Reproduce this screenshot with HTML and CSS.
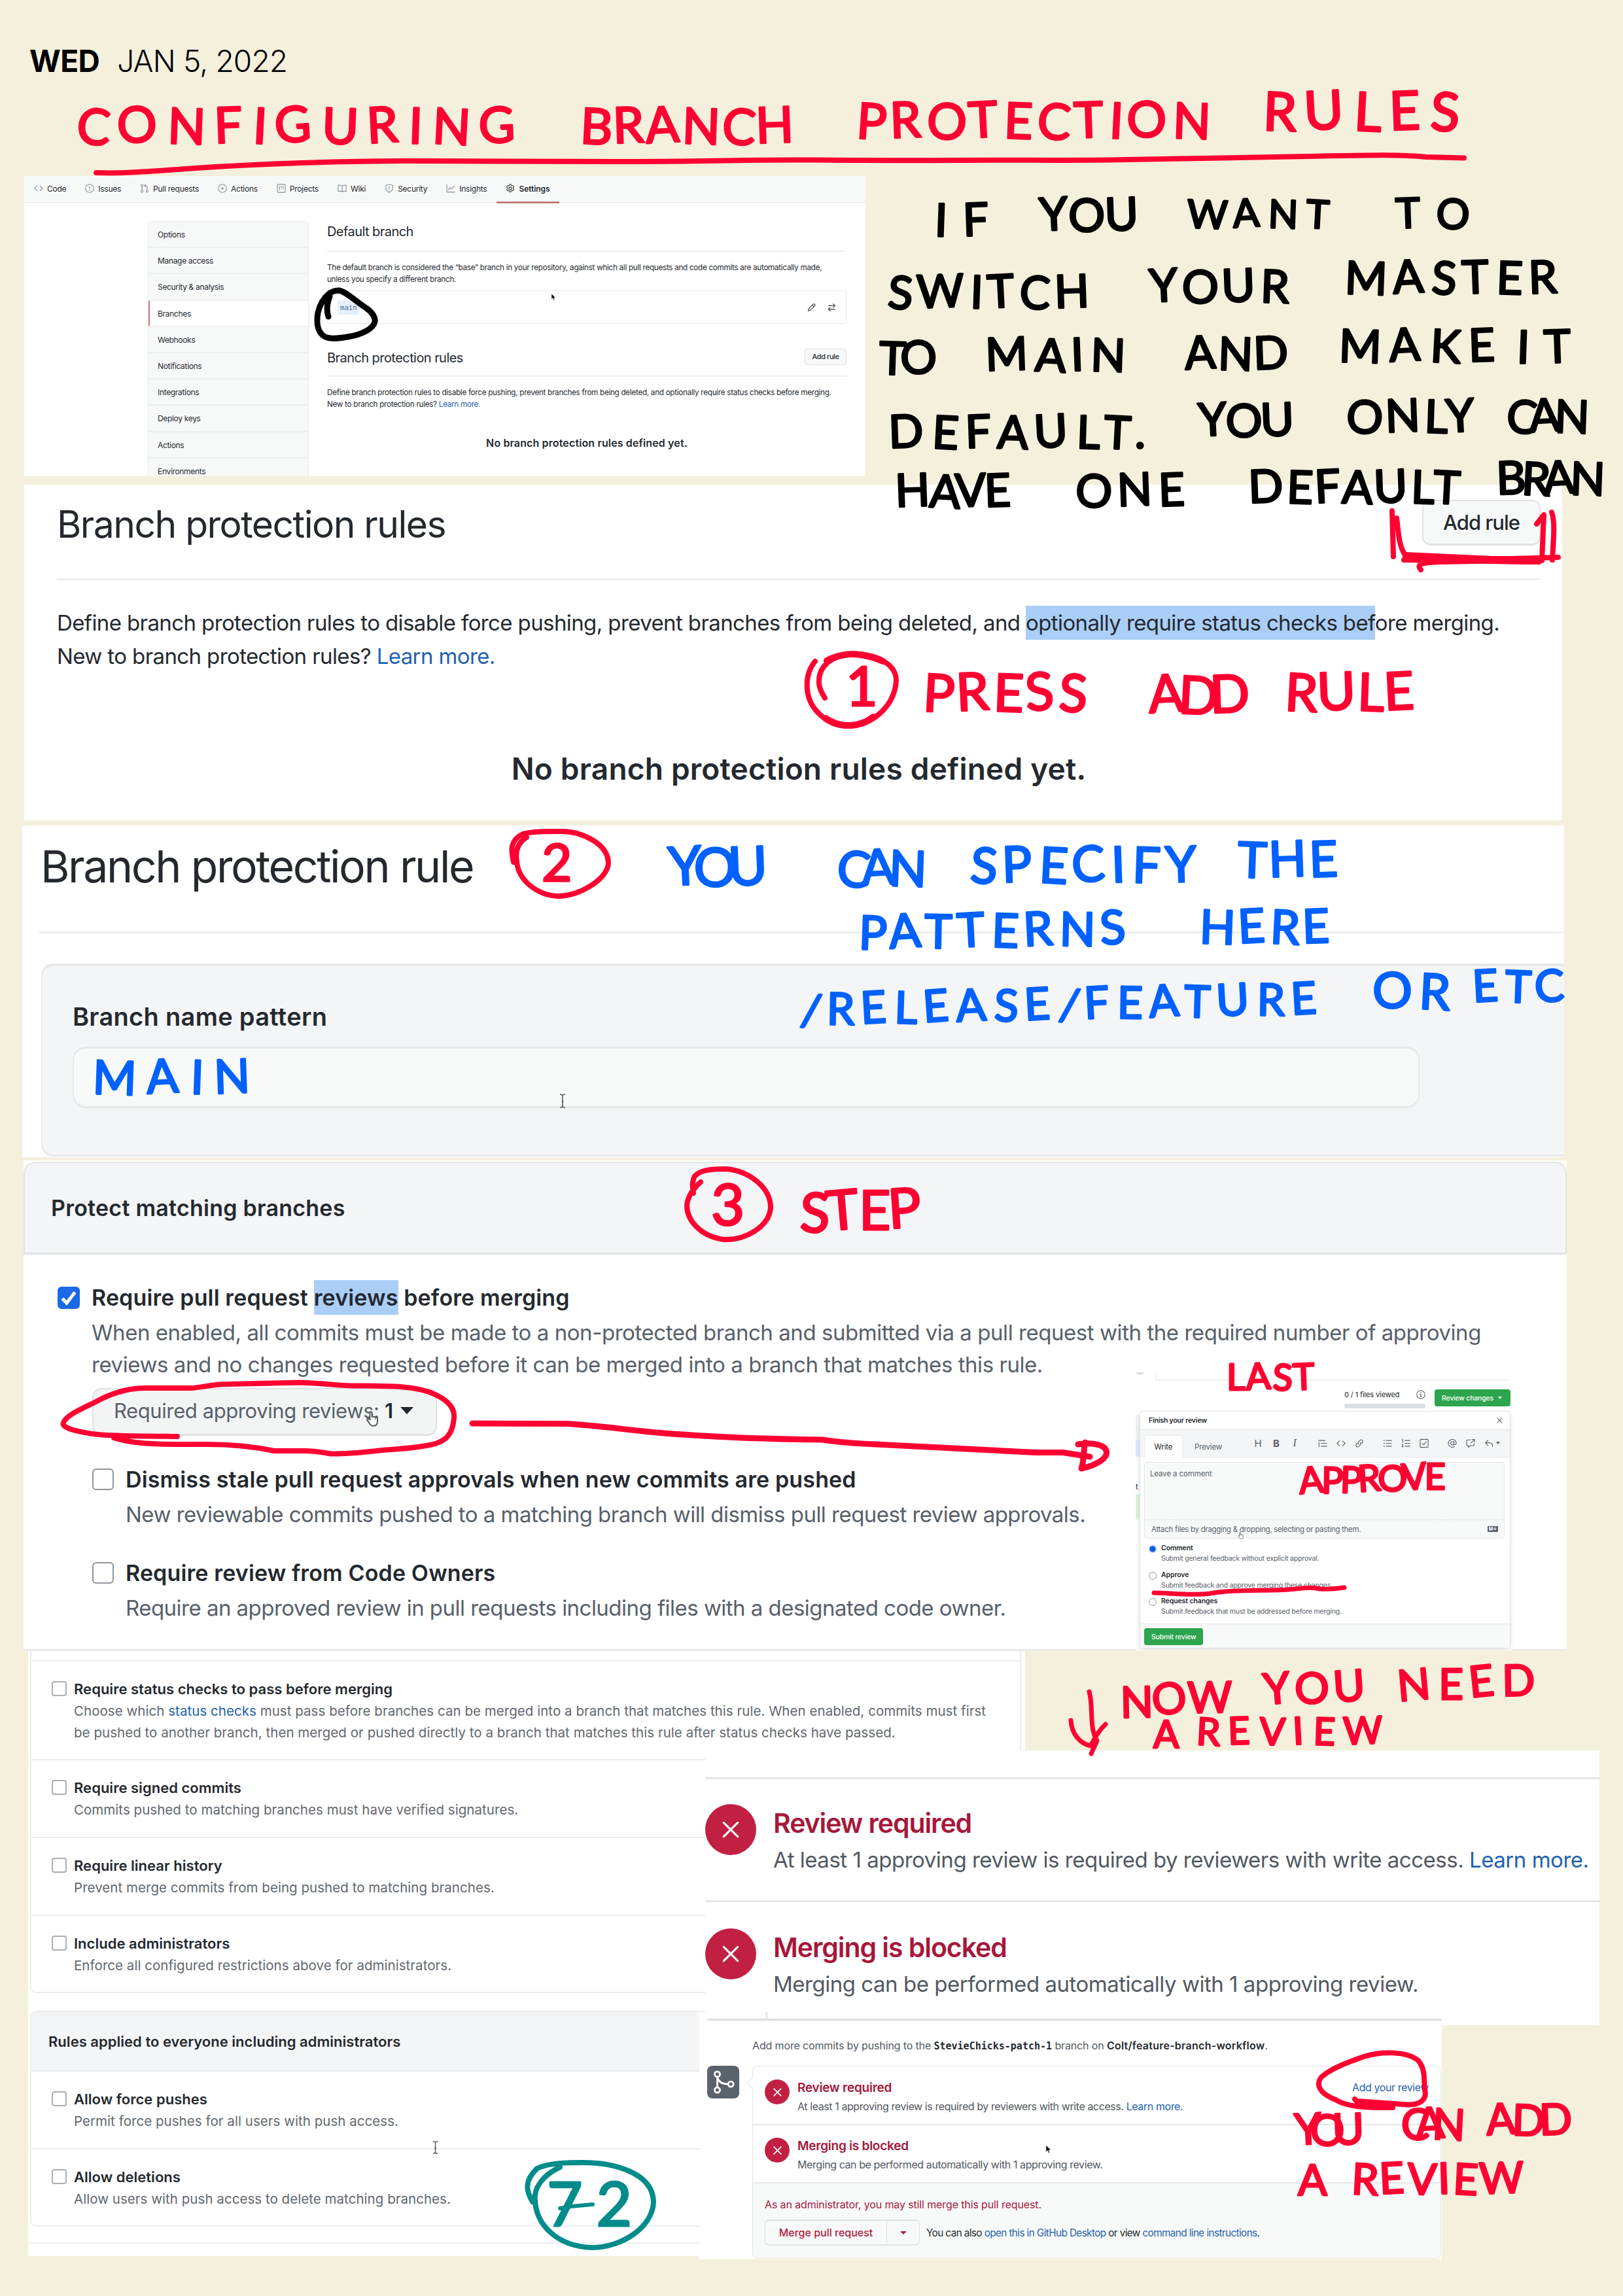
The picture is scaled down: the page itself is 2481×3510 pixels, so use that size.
FILE: index.html
```
<!DOCTYPE html>
<html lang="en">
<head>
<meta charset="utf-8">
<title>Configuring branch protection rules</title>
<link rel="stylesheet" href="styles.css">
</head>
<body>
<svg width="0" height="0" class="defs">
  <symbol id="i-code" viewBox="0 0 16 16"><path d="M5.2 3.8 1 8l4.2 4.2M10.8 3.8 15 8l-4.2 4.2"/></symbol>
  <symbol id="i-issue" viewBox="0 0 16 16"><circle cx="8" cy="8" r="7.2"/><path d="M8 4.2v4.6M8 11v1"/></symbol>
  <symbol id="i-info" viewBox="0 0 16 16"><circle cx="8" cy="8" r="7.2"/><path d="M8 4v1M6.6 7.3H8v4M6.4 11.4h3.4"/></symbol>
  <symbol id="i-pr" viewBox="0 0 16 16"><circle cx="3.5" cy="3" r="1.8"/><circle cx="3.5" cy="13" r="1.8"/><circle cx="12.5" cy="13" r="1.8"/><path d="M3.5 5v6M12.5 11V5.500c0-1.500-.8-2.300-2.200-2.300H8M10 1 7.800 3.200 10 5.400"/></symbol>
  <symbol id="i-play" viewBox="0 0 16 16"><circle cx="8" cy="8" r="7.2"/><path d="M6.600 5.300v5.400L11 8z" fill="currentColor" stroke="none"/></symbol>
  <symbol id="i-project" viewBox="0 0 16 16"><rect x="1" y="1" width="14" height="14" rx="1.500"/><path d="M4.700 4v7M8 4v3M11.300 4v5"/></symbol>
  <symbol id="i-book" viewBox="0 0 16 16"><path d="M8 4.200C7 3 6 2.500 4.500 2.500H1v10.500h4.300c1.200 0 2 .4 2.700 1.200.7-.8 1.500-1.200 2.700-1.200H15V2.500h-3.500C10 2.500 9 3 8 4.200zM8 4.200v10"/></symbol>
  <symbol id="i-shield" viewBox="0 0 16 16"><path d="M8 .9 14 2.800v4.700c0 3.400-2.200 5.900-6 7.500-3.800-1.600-6-4.100-6-7.500V2.800zM8 4.500v4M8 10.600v1"/></symbol>
  <symbol id="i-graph" viewBox="0 0 16 16"><path d="M1.200 1.500v13h14M4 10.500l3-4 2.500 2.500L14.500 4"/></symbol>
  <symbol id="i-gear" viewBox="0 0 16 16"><circle cx="8" cy="8" r="2.400"/><path d="M6.700 1h2.600l.5 2 1.300.7 2-.6 1.300 2.300-1.500 1.400v1.600l1.500 1.400-1.300 2.300-2-.6-1.300.7-.5 2H6.700l-.5-2-1.300-.7-2 .6-1.300-2.300 1.500-1.400V6.800L1.600 5.400l1.300-2.300 2 .6 1.300-.7z"/></symbol>
  <symbol id="i-pencil" viewBox="0 0 16 16"><path d="M11.300 1.700c.6-.6 1.500-.6 2.100 0l.9.900c.6.600.6 1.500 0 2.100L5.700 13.300l-4 1 1-4zM9.700 3.500l2.800 2.800"/></symbol>
  <symbol id="i-swap" viewBox="0 0 16 16"><path d="M2 4.700h12M11 1.500l3.200 3.200L11 7.900M14 11.300H2M5 8.100l-3.200 3.200L5 14.500"/></symbol>
  <symbol id="i-x" viewBox="0 0 16 16"><path d="M3.500 3.500l9 9M12.500 3.500l-9 9"/></symbol>
  <symbol id="i-merge" viewBox="0 0 16 16"><circle cx="4" cy="2.900" r="1.700"/><circle cx="4" cy="13.100" r="1.700"/><circle cx="12.700" cy="9.300" r="1.700"/><path d="M4 4.700v6.600M4 4.900c.7 2.800 2.900 4.400 6.900 4.400"/></symbol>
  <symbol id="i-quote" viewBox="0 0 16 16"><path d="M1 3h11M5.500 8H15M5.500 13H15M1.500 6.500V14"/></symbol>
  <symbol id="i-link" viewBox="0 0 16 16"><path d="M6.500 9.500c-1.300-1.300-1.300-3 0-4.200L9 2.700c2.800-2.600 6.500 1 4.200 3.900L11.700 8.200M9.500 6.500c1.300 1.300 1.300 3 0 4.200L7 13.300c-2.800 2.600-6.500-1-4.200-3.900l1.500-1.600"/></symbol>
  <symbol id="i-ul" viewBox="0 0 16 16"><path d="M6 3h9M6 8h9M6 13h9M1.500 3H3M1.500 8H3M1.500 13H3"/></symbol>
  <symbol id="i-ol" viewBox="0 0 16 16"><path d="M6.500 3H15M6.500 8H15M6.500 13H15M1.500 2l1.200-.6V6M1.200 10.200c1-1 2.400-.2 1.700.9L1.200 14h2.300"/></symbol>
  <symbol id="i-task" viewBox="0 0 16 16"><rect x="1" y="1" width="14" height="14" rx="1.500"/><path d="M4.700 8.200l2.300 2.300 4.500-5"/></symbol>
  <symbol id="i-at" viewBox="0 0 16 16"><circle cx="8" cy="8" r="2.900"/><path d="M10.900 5v4c0 2.400 4 2.200 4-1A6.900 6.900 0 1 0 12 13.600"/></symbol>
  <symbol id="i-ref" viewBox="0 0 16 16"><path d="M8 2H2.500C1.700 2 1.200 2.500 1.200 3.200v7.600c0 .7.500 1.200 1.300 1.200H4v3l3.500-3h5.300c.7 0 1.200-.5 1.200-1.200V8M8.500 7.500l6-6M10.500 1.200h4.300v4.300"/></symbol>
  <symbol id="i-reply" viewBox="0 0 16 16"><path d="M6.500 2.500 2 7l4.500 4.500M2 7h7c3.500 0 5.500 2 5.500 6.500"/></symbol>
  <symbol id="i-beam" viewBox="0 0 10 22"><path d="M1 1c2 0 4 .5 4 2 0-1.500 2-2 4-2M5 3v16M3.500 12h3M1 21c2 0 4-.5 4-2 0 1.500 2 2 4 2"/></symbol>
  <symbol id="i-arrow" viewBox="0 0 10 16"><path d="M1 1v12l2.800-2.600L5.700 15l2-.9-1.900-4.300 3.700-.3z" fill="#111" stroke="#fff" stroke-width=".8"/></symbol>
  <symbol id="i-hand" viewBox="0 0 16 20"><path d="M5 11V2.500c0-2 2.600-2 2.600 0V8c.3-1.500 2.400-1.300 2.500.2.500-1.200 2.300-1 2.400.5.500-1 2.200-.7 2.200.8V13c0 4-1.700 6-5.200 6-3 0-4.200-1.500-5.200-3.500L1.600 11.800c-.8-1.700 1-2.500 2-1.300z" fill="#fff"/></symbol>
</svg>

<main class="note">
  <header class="date"><b>WED</b><span>JAN 5, 2022</span></header>

  <section class="clip settings">
    <nav class="tabs">
      <span class="tab"><svg class="ic"><use href="#i-code"/></svg>Code</span>
      <span class="tab"><svg class="ic"><use href="#i-issue"/></svg>Issues</span>
      <span class="tab"><svg class="ic"><use href="#i-pr"/></svg>Pull requests</span>
      <span class="tab"><svg class="ic"><use href="#i-play"/></svg>Actions</span>
      <span class="tab"><svg class="ic"><use href="#i-project"/></svg>Projects</span>
      <span class="tab"><svg class="ic"><use href="#i-book"/></svg>Wiki</span>
      <span class="tab"><svg class="ic"><use href="#i-shield"/></svg>Security</span>
      <span class="tab"><svg class="ic"><use href="#i-graph"/></svg>Insights</span>
      <span class="tab active"><svg class="ic"><use href="#i-gear"/></svg>Settings</span>
    </nav>
    <div class="settings-body">
      <ul class="side">
        <li>Options</li><li>Manage access</li><li>Security &amp; analysis</li><li class="on">Branches</li><li>Webhooks</li><li>Notifications</li><li>Integrations</li><li>Deploy keys</li><li>Actions</li><li>Environments</li>
      </ul>
      <div class="settings-main">
        <h2>Default branch</h2>
        <p>The default branch is considered the “base” branch in your repository, against which all pull requests and code commits are automatically made,<br>unless you specify a different branch.</p>
        <div class="branch-box">
          <code>main</code>
          <svg class="ic"><use href="#i-pencil"/></svg><svg class="ic"><use href="#i-swap"/></svg>
          <svg class="ptr"><use href="#i-arrow"/></svg>
        </div>
        <div class="rules-head"><h2>Branch protection rules</h2><span class="btn">Add rule</span></div>
        <p class="rules-text">Define branch protection rules to disable force pushing, prevent branches from being deleted, and optionally require status checks before merging.<br>New to branch protection rules? <a>Learn more.</a></p>
        <h3>No branch protection rules defined yet.</h3>
      </div>
    </div>
  </section>

  <section class="clip rules">
    <div class="rules-top"><h2>Branch protection rules</h2><span class="btn">Add rule</span></div>
    <p>Define branch protection rules to disable force pushing, prevent branches from being deleted, and <mark>optionally require status checks bef</mark>ore merging.<br>New to branch protection rules? <a>Learn more.</a></p>
    <h3>No branch protection rules defined yet.</h3>
  </section>

  <section class="clip pattern">
    <h2>Branch protection rule</h2>
    <div class="panel">
      <label>Branch name pattern</label>
      <div class="input"><svg class="beam"><use href="#i-beam"/></svg></div>
    </div>
  </section>

  <section class="clip protect">
    <h3>Protect matching branches</h3>
    <div class="opt first">
      <span class="check checked"><svg viewBox="0 0 16 16"><path d="M3.500 8.500l3 3.300L12.500 4"/></svg></span>
      <div>
        <b>Require pull request <mark>reviews</mark> before merging</b>
        <p>When enabled, all commits must be made to a non-protected branch and submitted via a pull request with the required number of approving<br>reviews and no changes requested before it can be merged into a branch that matches this rule.</p>
        <span class="select">Required approving reviews: <strong>1</strong><i class="caret"></i><svg class="hand"><use href="#i-hand"/></svg></span>
      </div>
    </div>
    <div class="opt sub">
      <span class="check"></span>
      <div><b>Dismiss stale pull request approvals when new commits are pushed</b><p>New reviewable commits pushed to a matching branch will dismiss pull request review approvals.</p></div>
    </div>
    <div class="opt sub">
      <span class="check"></span>
      <div><b>Require review from Code Owners</b><p>Require an approved review in pull requests including files with a designated code owner.</p></div>
    </div>
  </section>

  <section class="clip more">
    <div class="group cut">
      <div class="strip"></div>
      <div class="row"><span class="check"></span><div><b>Require status checks to pass before merging</b><p>Choose which <a>status checks</a> must pass before branches can be merged into a branch that matches this rule. When enabled, commits must first<br>be pushed to another branch, then merged or pushed directly to a branch that matches this rule after status checks have passed.</p></div></div>
      <div class="row"><span class="check"></span><div><b>Require signed commits</b><p>Commits pushed to matching branches must have verified signatures.</p></div></div>
      <div class="row"><span class="check"></span><div><b>Require linear history</b><p>Prevent merge commits from being pushed to matching branches.</p></div></div>
      <div class="row"><span class="check"></span><div><b>Include administrators</b><p>Enforce all configured restrictions above for administrators.</p></div></div>
    </div>
    <div class="group">
      <h3>Rules applied to everyone including administrators</h3>
      <div class="row"><span class="check"></span><div><b>Allow force pushes</b><p>Permit force pushes for all users with push access.</p></div></div>
      <div class="row"><span class="check"></span><div><b>Allow deletions</b><p>Allow users with push access to delete matching branches.</p></div></div>
      <svg class="beam"><use href="#i-beam"/></svg>
    </div>
    <hr>
  </section>

  <section class="popup">
    <div class="pop-top"><i class="dot"></i></div>
    <div class="pop-bar">
      <div class="viewed"><span>0 / 1 files viewed</span><svg class="ic"><use href="#i-info"/></svg><i></i></div>
      <span class="green">Review changes<i class="caret"></i></span>
    </div>
    <div class="pop-row">
      <div class="sliver"><i class="s1"></i><i class="s2"></i><span>t</span><i class="s3"></i></div>
      <div class="dialog">
        <div class="dlg-head"><b>Finish your review</b><svg class="ic"><use href="#i-x"/></svg></div>
        <div class="dlg-tabs">
          <span class="write">Write</span><span class="preview">Preview</span>
          <div class="tools">
            <span class="tl">H</span><span class="tl bold">B</span><span class="tl ital">I</span>
            <svg class="ic g"><use href="#i-quote"/></svg><svg class="ic"><use href="#i-code"/></svg><svg class="ic"><use href="#i-link"/></svg>
            <svg class="ic g"><use href="#i-ul"/></svg><svg class="ic"><use href="#i-ol"/></svg><svg class="ic"><use href="#i-task"/></svg>
            <svg class="ic g"><use href="#i-at"/></svg><svg class="ic"><use href="#i-ref"/></svg><svg class="ic"><use href="#i-reply"/></svg><i class="caret"></i>
          </div>
        </div>
        <div class="area"><p>Leave a comment</p><div>Attach files by dragging &amp; dropping, selecting or pasting them.<span class="md">M↓</span><svg class="hand"><use href="#i-hand"/></svg></div></div>
        <div class="radio"><span class="rb on"></span><div><b>Comment</b><p>Submit general feedback without explicit approval.</p></div></div>
        <div class="radio"><span class="rb"></span><div><b>Approve</b><p>Submit feedback and approve merging these changes.</p></div></div>
        <div class="radio"><span class="rb"></span><div><b>Request changes</b><p>Submit feedback that must be addressed before merging.</p></div></div>
        <div class="dlg-foot"><span class="green">Submit review</span></div>
      </div>
    </div>
  </section>

  <section class="status">
    <div class="status-top"></div>
    <div class="st"><span class="bad"><svg class="ic"><use href="#i-x"/></svg></span><div><h4>Review required</h4><p>At least 1 approving review is required by reviewers with write access. <a>Learn more.</a></p></div></div>
    <div class="st second"><span class="bad"><svg class="ic"><use href="#i-x"/></svg></span><div><h4>Merging is blocked</h4><p>Merging can be performed automatically with 1 approving review.</p></div></div>
  </section>

  <section class="merge">
    <div class="merge-top"></div>
    <p class="push">Add more commits by pushing to the <code>StevieChicks-patch-1</code> branch on <b>Colt/feature-branch-workflow</b>.</p>
    <div class="merge-row">
      <span class="badge"><svg class="ic"><use href="#i-merge"/></svg></span>
      <div class="merge-box">
        <div class="mst"><span class="bad"><svg class="ic"><use href="#i-x"/></svg></span><div><h4>Review required</h4><p>At least 1 approving review is required by reviewers with write access. <a>Learn more.</a></p></div><a class="add">Add your review</a></div>
        <div class="mst"><span class="bad"><svg class="ic"><use href="#i-x"/></svg></span><div><h4>Merging is blocked</h4><p>Merging can be performed automatically with 1 approving review.</p></div><svg class="ptr"><use href="#i-arrow"/></svg></div>
        <div class="mfoot">
          <p>As an administrator, you may still merge this pull request.</p>
          <div class="mact"><span class="mbtn"><span>Merge pull request</span><i><i class="caret"></i></i></span><span class="also">You can also <a>open this in GitHub Desktop</a> or view <a>command line instructions</a>.</span></div>
        </div>
      </div>
    </div>
  </section>

  <svg class="ink" viewBox="0 0 2481 3510">
    <g class="red">
      <g class="w" font-size="76">
        <text x="116" y="219" textLength="672" rotate="4 -3 2 -2 3 -4 2 -3 2 3 -2">CONFIGURING</text>
        <text x="886" y="219" textLength="328" rotate="3 -2 -3 2 4 -2">BRANCH</text>
        <text x="1308" y="211" textLength="542" rotate="4 -2 3 -3 2 4 -2 3 -3 2">PROTECTION</text>
        <text x="1930" y="199" textLength="300" rotate="2 -3 3 -2 3" font-size="82">RULES</text>
      </g>
      <path d="M147 264C190 266 240 261 299 257S400 251 461 249 560 246 620 246 780 247 940 247 1130 244 1239 244.500 1360 246 1460 245 1620 246 1722 244 1900 241 2000 239 2140 236 2180 240L2238 241.500" stroke-width="8"/>
      <path d="M2128 781L2130 851M2135 792C2138 815 2138 835 2149 850M2152 849L2278 855 2382 852M2146 856L2352 859M2172 871C2164 862 2175 860 2200 859L2352 856M2349 801L2360 787 2357 857M2372 783C2378 800 2374 830 2373 856" stroke-width="8"/>
      <path d="M2150 850L2280 856 2352 857" stroke-width="12"/>
      <path d="M1246 1011C1230 1030 1228 1065 1249 1088 1266 1106 1280 1110 1300 1110 1340 1106 1368 1075 1370 1040 1370 1018 1345 1000 1305 1000 1272 1001 1250 1018 1252 1045 1253 1054 1257 1061 1261 1067" stroke-width="8"/>
      <path d="M1264 1010Q1285 999 1306 1000T1350 1011M1262 1098Q1280 1110 1300 1109T1335 1096" stroke-width="10"/>
      <text class="w" x="1293" y="1079" font-size="84">1</text>
      <g class="w" font-size="80">
        <text x="1410" y="1087" textLength="251" rotate="3 -3 2 -4 3">PRESS</text>
        <text x="1757" y="1090" textLength="154" rotate="-3 3 -2">ADD</text>
        <text x="1963" y="1086" textLength="200" rotate="3 -2 2 -3">RULE</text>
      </g>
      <path d="M785 1318C781 1300 779 1285 799 1275 815 1270 840 1271 858 1271 890 1271 930 1290 930 1320 928 1345 885 1370 852 1370 820 1368 792 1345 790 1317 787 1300 792 1288 805 1280" stroke-width="8"/>
      <text class="w" x="828" y="1347" font-size="80">2</text>
      <path d="M1060 1824C1058 1812 1058 1805 1062 1798 1070 1789 1085 1787 1110 1787 1145 1790 1178 1815 1178 1846 1176 1875 1140 1896 1107 1895 1070 1890 1050 1865 1050 1843 1051 1828 1060 1817 1071 1807" stroke-width="8"/>
      <text class="w" x="1087" y="1873" font-size="88">3</text>
      <text class="w" x="1222" y="1883" font-size="84" textLength="188" transform="rotate(-2 1222 1883)" rotate="4 -3 2 -2">STEP</text>
      <path d="M271 2196C220 2195 180 2196 150 2193 125 2190 93 2184 97 2175 100 2163 130 2152 158 2137 180 2127 200 2122 221 2122L293 2122C315 2120 325 2116 348 2116L459 2113.500C500 2115 520 2119 550 2118.500 600 2119 630 2119 656 2128 680 2137 696 2150 694 2168 692 2190 685 2205 652 2210 630 2214 610 2215 585 2217 555 2220 530 2223 506 2222.500 490 2220 485 2218 467 2218L419 2218C390 2212 350 2208 316 2208 270 2208 210 2210 174 2198" stroke-width="8"/>
      <path d="M722 2176L866 2176.500C930 2180 980 2190 1044 2193 1110 2198 1180 2200 1257 2201 1290 2206 1310 2207 1339 2208L1584 2220.500H1625L1666 2227M1648 2208C1700 2200 1710 2232 1653 2245 1658 2230 1656 2215 1659 2205" stroke-width="9"/>
      <text class="w" x="1875" y="2125" font-size="56" textLength="135" rotate="0 -3 2 -2">LAST</text>
      <text class="w" x="1987" y="2284" font-size="56" textLength="223" transform="rotate(-2 1987 2284)" rotate="-3 3 4 -2 2 -3 2">APPROVE</text>
      <path d="M1764 2435C1790 2435 1820 2440 1850 2436 1880 2430 1920 2432 1961 2430.500 1990 2429 2000 2425 2018 2429 2035 2430 2045 2428 2055 2427" stroke-width="7"/>
      <path d="M1665 2586C1672 2610 1664 2640 1677 2661L1668 2681M1637 2630C1638 2650 1650 2665 1667 2669 1675 2655 1680 2645 1690 2636" stroke-width="7"/>
      <g class="w" font-size="66">
        <text x="1713" y="2626" textLength="171" transform="rotate(-4 1713 2626)" rotate="3 -2 3">NOW</text>
        <text x="1933" y="2606" textLength="155" transform="rotate(-2 1933 2606)" rotate="-3 2 -2">YOU</text>
        <text x="2138" y="2601" textLength="209" transform="rotate(-3 2138 2601)" rotate="-2 3 -3 2">NEED</text>
        <text x="1763" y="2672" font-size="58">A</text>
        <text x="1828" y="2667" textLength="286" font-size="58" rotate="3 -2 2 -3 2 -2">REVIEW</text>
        <text x="1980" y="3279" textLength="106" rotate="-3 2 -2">YOU</text>
        <text x="2141" y="3270" textLength="98" rotate="2 -3 3">CAN</text>
        <text x="2273" y="3264" textLength="131" rotate="-3 2 -2">ADD</text>
        <text x="1984" y="3356">A</text>
        <text x="2065" y="3354" textLength="265" rotate="3 -3 2 -2 3 -2">REVIEW</text>
      </g>
      <path d="M2071 3209L2080 3219 2129 3221M2129 3222C2095 3222 2060 3222 2042 3210 2010 3198 2012 3180 2024 3172 2040 3160 2060 3153 2085 3144 2110 3136 2150 3135 2168 3150 2180 3165 2176 3180 2178 3195 2182 3210 2170 3220 2145 3217L2074 3212" stroke-width="8"/>
    </g>
    <g class="black">
      <path d="M502 484C498 472 501 462 504 453M496 460C502 448 508 444 518 444 530 446 545 462 560 471 570 478 574 486 573 492 570 504 550 512 534 514.500 515 518 498 520 491 510 484 502 484 490 486 478 489 465 494 456 504 448" stroke-width="9"/>
      <g class="w" font-size="70">
        <text x="1428" y="361" textLength="84" rotate="2 -2">IF</text>
        <text x="1590" y="353" textLength="151" rotate="-3 2 -2">YOU</text>
        <text x="1814" y="348" textLength="217" font-size="60" rotate="2 -3 2 3">WANT</text>
        <text x="2134" y="349" textLength="112" font-size="64" rotate="-2 2">TO</text>
        <text x="1356" y="471" textLength="310" rotate="4 -2 2 -3 3 -2">SWITCH</text>
        <text x="1758" y="462" textLength="212" rotate="-3 3 -2 2">YOUR</text>
        <text x="2055" y="449" textLength="326" rotate="2 -3 3 -2 2 -2">MASTER</text>
        <text x="1343" y="572" textLength="90" rotate="2 -2">TO</text>
        <text x="1507" y="567" textLength="213" rotate="-2 3 -2 2">MAIN</text>
        <text x="1812" y="565" textLength="158" rotate="-3 2 -2">AND</text>
        <text x="2046" y="553" textLength="240" rotate="2 -3 3 -2">MAKE</text>
        <text x="2318" y="555" textLength="84" rotate="2 -2">IT</text>
        <text x="1359" y="685" textLength="392" rotate="-2 3 -2 2 -3 2 3 0">DEFAULT.</text>
        <text x="1833" y="667" textLength="146" rotate="-3 2 -2">YOU</text>
        <text x="2057" y="661" textLength="198" rotate="3 -2 2 -3">ONLY</text>
        <text x="2302" y="661" textLength="127" rotate="3 -3 2">CAN</text>
        <text x="1369" y="775" textLength="177" rotate="-2 3 -2 -2">HAVE</text>
        <text x="1643" y="774" textLength="169" rotate="3 -2 -2">ONE</text>
        <text x="1909" y="769" textLength="322" rotate="-2 2 -3 2 -2 2 3">DEFAULT</text>
        <text x="2288" y="756" textLength="165" rotate="-2 3 -3 2">BRAN</text>
      </g>
    </g>
    <g class="blue w" font-size="76">
      <text x="1023" y="1354" textLength="151" font-size="82" rotate="-3 2 -2">YOU</text>
      <text x="1278" y="1354" textLength="138" rotate="4 -3 2">CAN</text>
      <text x="1482" y="1349" textLength="348" rotate="4 -2 3 -3 -2 2 -2">SPECIFY</text>
      <text x="1891" y="1341" textLength="155" rotate="2 -2 -2">THE</text>
      <text x="1312" y="1451" textLength="410" transform="rotate(-1 1312 1451)" rotate="3 -3 2 -2 3 -2 2 -3" font-size="72">PATTERNS</text>
      <text x="1833" y="1442" textLength="200" font-size="72" rotate="2 -3 3 -2">HERE</text>
      <text x="1222" y="1567" textLength="792" transform="rotate(-1.200 1222 1567)" font-size="68" rotate="8 2 -2 3 -3 -2 3 -2 8 -2 2 -3 3 -2 2 -2">/RELEASE/FEATURE</text>
      <text x="2099" y="1542" textLength="117" rotate="-2 3">OR</text>
      <text x="2252" y="1532" textLength="140" font-size="68" rotate="-3 2 -2">ETC</text>
      <text x="141" y="1672" textLength="242" font-size="72" rotate="2 -3 2 -2">MAIN</text>
    </g>
    <g class="teal">
      <path d="M814 3366C805 3350 800 3335 821 3315 840 3306 870 3306 891 3306 935 3306 998 3320 999 3366 998 3405 950 3436 905 3436 850 3434 820 3400 818 3365 815 3345 830 3325 856 3313" stroke-width="8"/>
      <path d="M856 3376C872 3372 888 3372 906 3370" stroke-width="6"/>
      <text class="w" x="836" y="3403" font-size="94" textLength="130">72</text>
    </g>
  </svg>
</main>
</body>
</html>
```
FILE: styles.css
```
* { box-sizing: border-box; }
body { margin: 0; background: #f5f0dc; color: #24292f; font-family: Inter, "Liberation Sans", sans-serif; }
h2, h3, h4, p, ul { margin: 0; padding: 0; font-weight: 400; }
h3, h4, b { font-weight: 600; }
a { color: #1f62b0; }
mark { background: #abcef8; color: inherit; }
.defs { position: absolute; }
.ic { flex: none; fill: none; stroke: currentColor; stroke-width: 1.5; stroke-linecap: round; stroke-linejoin: round; }
.beam, .hand, .ptr { position: absolute; fill: none; stroke: #555; stroke-width: 1.6; }
.caret { display: inline-block; width: 0; height: 0; border: solid transparent; border-bottom-width: 0; border-top-color: currentColor; }

.note { position: relative; width: 2481px; height: 3510px; display: flex; flex-direction: column; align-items: flex-start; overflow: hidden; }
.date { height: 269px; padding: 64px 0 0 45px; display: flex; gap: 27px; font-size: 46px; line-height: 58px; color: #000; letter-spacing: -.018em; }
.date b { font-weight: 700; letter-spacing: -.012em; }
.date span { font-weight: 300; }
.clip { background: #fff; overflow: hidden; flex: none; }

/* repository settings overview */
.settings { margin-left: 37px; width: 1286px; height: 459px; }
.tabs { height: 41px; display: flex; align-items: center; gap: 29px; padding: 0 0 2px 15px; background: #f7f9f9; border-bottom: 1px solid #e4e6e8; font-size: 12px; letter-spacing: -.021em; }
.tab { display: flex; align-items: center; gap: 6px; }
.tab .ic { width: 14px; height: 14px; color: #8c9299; stroke-width: 1.3; }
.tab.active { position: relative; font-weight: 600; letter-spacing: -.006em; }
.tab.active .ic { color: #444; }
.tab.active::after { content: ""; position: absolute; left: -14px; right: -15px; bottom: -15px; height: 3px; background: #c4807e; }
.settings-body { display: flex; padding-left: 189px; margin-top: 28px; }
.side { list-style: none; width: 246px; border: 1px solid #e6e8ea; border-radius: 5px 5px 0 0; background: #f7f9f9; font-size: 12px; letter-spacing: -.027em; }
.side li { height: 40.200px; padding: 1px 0 0 14px; line-height: 38px; border-bottom: 2px solid #eceef0; }
.side .on { background: #fff; box-shadow: inset 2px 0 #cf7773; }
.settings-main { margin-left: 28px; width: 794px; font-size: 11.700px; letter-spacing: -.0245em; line-height: 18px; }
.settings-main h2 { font-size: 20px; line-height: 32px; height: 47px; border-bottom: 2px solid #eceef0; letter-spacing: -.028em; }
.settings-main p { margin-top: 15px; white-space: nowrap; }
.branch-box { position: relative; display: flex; align-items: center; gap: 18px; height: 51px; margin-top: 8px; padding: 0 15px; border: 1px solid #e6e8ea; border-radius: 4px; }
.branch-box code { margin-right: auto; padding: 4px; border-radius: 4px; background: #e4f0fd; font: 10.600px/14px "DejaVu Sans Mono", monospace; letter-spacing: 0; color: #47698c; }
.branch-box .ic { width: 13px; height: 14px; color: #444; }
.branch-box .ptr { left: 341px; top: 3px; width: 8px; height: 12px; }
.rules-head { display: flex; justify-content: space-between; margin-top: 38px; height: 43px; border-bottom: 2px solid #eceef0; }
.rules-head h2 { border: 0; height: auto; line-height: 28px; }
.rules-head .btn { height: 25px; width: 64px; text-align: center; line-height: 23px; border: 1px solid #dcdfe1; border-radius: 4px; background: #f7f9f9; font-size: 11px; font-weight: 500; letter-spacing: -.038em; }
.settings-main .rules-text { margin-top: 15px; }
.settings-main h3 { margin-top: 40px; font-size: 16px; line-height: 20px; letter-spacing: .008em; text-align: center; }

/* enlarged rules */
.rules { margin: 13px 0 0 37px; width: 2351px; height: 513px; padding: 23px 33px 0 50px; }
.rules-top { display: flex; justify-content: space-between; height: 123px; border-bottom: 3px solid #eee; }
.rules-top h2 { font-size: 57px; line-height: 76px; letter-spacing: -.0265em; }
.rules-top .btn { width: 181px; height: 70px; text-align: center; line-height: 66px; border: 2px solid #e0e2e3; border-bottom-width: 3px; border-radius: 13px; background: #f7f9f9; font-size: 31px; font-weight: 500; letter-spacing: -.032em; }
.rules p { margin-top: 40px; font-size: 33px; line-height: 51px; letter-spacing: -.0185em; white-space: nowrap; }
.rules mark { padding: 6px 0; }
.rules h3 { margin-top: 119px; font-size: 46px; line-height: 54px; letter-spacing: .0045em; text-align: center; }

/* name pattern */
.pattern { margin: 8px 0 0 34px; width: 2357px; height: 507px; padding: 22px 0 0 29px; }
.pattern h2 { height: 143px; margin-left: -3px; padding-left: 2px; font-size: 68px; line-height: 80px; letter-spacing: -.0355em; border-bottom: 3px solid #eee; }
.panel { margin-top: 46px; height: 295px; padding: 54px 0 0 46px; border: 2px solid #e6e8ea; border-width: 4px 0 3px 2px; border-radius: 18px 0 0 18px; background: #f4f5f7; }
.panel label { display: block; font-size: 38px; font-weight: 600; line-height: 46px; letter-spacing: .008em; }
.input { position: relative; margin-top: 23px; width: 2059px; height: 94px; border: 3px solid #e6e8e9; border-width: 3px 2px; border-radius: 20px; background: #f8faf9; }
.input .beam { left: 742px; top: 69px; width: 10px; height: 22px; }

/* protect matching branches */
.protect { margin: 5px 0 0 36px; width: 2359px; height: 750px; padding-top: 2px; border-bottom: 3px solid #e8e9ea; font-size: 33px; letter-spacing: -.0145em; color: #57606a; }
.protect h3, .protect b { color: #24292f; font-size: 34px; letter-spacing: .004em; }
.protect h3 { height: 142px; padding-left: 40px; line-height: 138px; background: #f4f5f7; border: 2px solid #e2e4e7; border-bottom-width: 3px; border-radius: 18px 18px 0 0; letter-spacing: .007em; }
.opt { display: flex; white-space: nowrap; }
.opt b { display: block; line-height: 53px; }
.opt p { line-height: 49px; padding-top: 3px; }
.opt mark { padding: 6px 0; }
.check { flex: none; width: 33px; height: 33px; margin: 10px 18px 0 0; border: 2px solid #8f9499; border-radius: 6px; background: #fff; }
.checked { border: 0; background: #1a6ae8; height: 34px; }
.checked svg { display: block; fill: none; stroke: #fff; stroke-width: 2.400; }
.opt.first { margin: 39px 0 0 52px; }
.opt.first .check { margin: 10px 18px 0 0; width: 34px; }
.opt.first p { letter-spacing: -.0135em; }
.select { position: relative; display: flex; align-items: center; width: 527px; height: 73px; margin: 11px 0 0 1px; padding: 0 0 3px 31px; border: 2px solid #dfe1e3; border-bottom-width: 3px; border-radius: 14px; background: #f3f5f5; font-size: 31px; letter-spacing: -.013em; white-space: pre; }
.select strong { font-weight: 600; color: #24292f; }
.select .caret { margin-left: 11px; border-width: 11px 10px 0; color: #24292f; }
.select .hand { left: 416px; top: 33px; width: 20px; height: 24px; }
.opt.sub { margin: 40px 0 0 105px; }
.opt.sub p { letter-spacing: -.016em; }
.opt.sub + .opt.sub { margin-top: 38px; }

/* further rules */
.more { margin-left: 43px; width: 1524px; height: 925px; padding-left: 3px; font-size: 20.500px; color: #62686f; letter-spacing: .002em; }
.more h3, .more b { font-size: 22px; letter-spacing: .001em; color: #24292f; }
.group { position: relative; width: 1515px; height: 330px; margin-top: 27px; border: 2px solid #ebedef; border-radius: 10px; overflow: hidden; }
.group.cut { height: 523px; margin-top: 0; border-top: 0; border-radius: 0 0 10px 10px; }
.strip { height: 16px; border-bottom: 2px solid #ebedef; }
.row { display: flex; height: 119px; padding: 27px 0 0 31px; border-bottom: 2px solid #ebedef; }
.strip + .row { height: 151px; }
.row:last-of-type { border: 0; }
.row b { display: block; line-height: 30px; }
.row p { padding-top: 2px; line-height: 33px; white-space: nowrap; }
.row .check { width: 23px; height: 23px; margin: 3px 11px 0 0; border-color: #aaafb4; border-radius: 4px; }
.group h3 { height: 91px; padding-left: 26px; line-height: 91px; background: #f4f5f7; border-bottom: 2px solid #e8eaec; }
.group .beam { left: 613px; top: 197px; width: 9px; height: 20px; }
.more hr { margin: 24px 0 0; border: 0; height: 2px; width: 1515px; background: #ebedef; }

/* review popup */
.popup { position: absolute; left: 1736px; top: 2098px; width: 576px; height: 426px; overflow: hidden; background: #fff; font-size: 10.500px; letter-spacing: -.018em; }
.pop-top { margin-left: 30px; width: 543px; height: 12px; border: solid #e3e5e7; border-width: 0 0 1px 1px; }
.dot { position: absolute; left: 0; top: -10px; width: 14px; height: 14px; border-radius: 50%; background: #dcdfe2; }
.pop-bar { display: flex; justify-content: flex-end; gap: 14px; height: 47px; padding: 14px 3px 0 0; }
.viewed { display: flex; flex-wrap: wrap; justify-content: space-between; width: 124px; font-size: 11px; line-height: 17px; letter-spacing: -.01em; }
.viewed .ic { width: 14px; height: 16px; color: #57606a; stroke-width: 1.200; }
.viewed i { width: 124px; height: 7px; border-radius: 3px; background: #dcdfe4; }
.green { height: 26px; padding: 0 11px; display: flex; align-items: center; gap: 7px; border-radius: 4px; background: #2da44e; color: #fff; font-weight: 500; letter-spacing: -.02em; }
.green .caret { border-width: 4px 3.500px 0; }
.pop-bar .green { width: 116px; }
.pop-row { display: flex; }
.sliver { width: 6px; height: 365px; padding-top: 6px; display: flex; flex-direction: column; font-size: 11px; line-height: 14px; }
.s1 { height: 38px; background: #f3f5f7; }
.s2 { height: 26px; background: #dfeafb; margin-bottom: 39px; }
.s3 { height: 39px; background: #dcf8e2; margin-top: 4px; }
.dialog { width: 567px; height: 363px; border: 1px solid #e1e4e8; border-radius: 5px; box-shadow: 0 3px 8px rgba(80,90,100,.18); background: #fff; overflow: hidden; }
.dlg-head { display: flex; justify-content: space-between; align-items: center; height: 28px; padding: 0 9px 0 13px; border-bottom: 1px solid #e6e8ea; }
.dlg-head .ic { width: 13px; height: 13px; color: #6b7178; }
.dlg-tabs { display: flex; height: 42px; background: #f4f5f7; border-bottom: 1px solid #e6e8ea; font-size: 11.500px; letter-spacing: -.013em; }
.write { margin: 8px 0 -1px 6px; width: 59px; line-height: 35px; text-align: center; background: #fff; border: 1px solid #e9ebed; border-bottom: 0; border-radius: 4px 4px 0 0; }
.preview { width: 78px; text-align: center; line-height: 53px; color: #57606a; }
.tools { display: flex; align-items: center; padding: 0 0 1px 30px; gap: 14px; color: #57606a; }
.tools .ic { width: 14px; height: 15px; stroke-width: 1.300; }
.tools .g { margin-left: 15px; }
.tl { width: 14px; text-align: center; font-size: 15px; }
.bold { font-weight: 700; }
.ital { font: italic 16px "Liberation Serif", serif; }
.tools .caret { margin-left: -10px; border-width: 4px 3.500px 0; }
.area { margin: 7px 8px 9px 6px; height: 117px; border: 1px solid #e3e5e7; border-radius: 4px; background: #f8faf9; font-size: 11.500px; color: #57606a; }
.area p { height: 88px; padding: 10px 0 0 8px; line-height: 15px; letter-spacing: -.01em; border-bottom: 1px dashed #dcdfe1; }
.area div { position: relative; display: flex; justify-content: space-between; align-items: center; height: 27px; padding: 0 9px 0 10px; letter-spacing: -.026em; }
.area .hand { left: 142px; top: 18px; width: 9px; height: 11px; }
.md { font-size: 7px; line-height: 9px; padding: 0 2px; color: #fff; background: #57606a; border-radius: 1px; font-weight: 700; }
.radio { display: flex; gap: 7px; height: 40.700px; padding-left: 13px; white-space: nowrap; color: #57606a; }
.radio b { display: block; line-height: 12px; color: #24292f; letter-spacing: -.01em; }
.radio p { line-height: 20px; }
.rb { width: 12px; height: 12px; margin-top: 1px; border: 1px solid #8f959b; border-radius: 50%; }
.rb.on { border: 0; background: radial-gradient(#1060dd 50%, #a9cbf7 56%); }
.dlg-foot { height: 42px; margin-top: -1px; padding: 6px; border-top: 1px solid #e3e5e7; background: #f8faf9; display: flex; }

/* blocked statuses, enlarged */
.bad { flex: none; display: flex; align-items: center; justify-content: center; border-radius: 50%; background: #c22043; color: #fff; }
h4 { color: #a7173a; }
.status { position: absolute; left: 1078px; top: 2676px; width: 1367px; height: 420px; background: #fff; color: #515962; }
.status-top { height: 44px; border-bottom: 3px solid #e3e6ea; }
.st { display: flex; gap: 26px; height: 188px; padding-top: 38px; border-bottom: 3px solid #e3e6ea; white-space: nowrap; }
.st.second { padding-top: 40px; border: 0; }
.st .bad { width: 78px; height: 78px; }
.st .bad .ic { width: 38px; height: 38px; stroke-width: 1.300; }
.st h4 { padding-top: 4px; font-size: 41px; line-height: 50px; letter-spacing: -.026em; }
.st p { padding-top: 7px; font-size: 33px; line-height: 48px; letter-spacing: -.0145em; }

/* merge box */
.merge { position: absolute; left: 1069px; top: 3076px; width: 1135px; height: 378px; background: #fff; font-size: 16px; color: #515962; white-space: nowrap; }
.merge-top { height: 13px; margin-left: 12px; border-bottom: 3px solid #dcdfe2; background: linear-gradient(#dcdfe2, #dcdfe2) 90px 0 / 2px 100% no-repeat; }
.push { padding: 23px 0 0 81px; line-height: 30px; letter-spacing: -.009em; }
.push code { font: bold 15px "DejaVu Sans Mono", monospace; letter-spacing: 0; color: #24292f; }
.push b { color: #24292f; letter-spacing: .016em; }
.merge-row { display: flex; gap: 20px; margin: 16px 0 0 12px; }
.badge { width: 49px; height: 50px; display: flex; align-items: center; justify-content: center; border-radius: 8px; background: #5a626c; color: #fff; }
.badge .ic { width: 38px; height: 40px; stroke-width: 1.200; }
.merge-box { position: relative; width: 1053px; height: 295px; border: 1px solid #e1e4e8; border-radius: 8px; background: #fff; }
.merge-box::before { content: ""; position: absolute; left: -7px; top: 19px; width: 12px; height: 12px; transform: rotate(45deg); background: #fff; border: solid #e1e4e8; border-width: 0 0 1px 1px; }
.mst { position: relative; display: flex; gap: 12px; height: 90px; padding: 20px 18px 0; border-bottom: 2px solid #e6e8ea; }
.mst + .mst { height: 89px; padding-top: 19px; }
.mst .bad { width: 38px; height: 38px; }
.mst .bad .ic { width: 19px; height: 19px; stroke-width: 1.400; }
.mst h4 { font-size: 19px; line-height: 26px; letter-spacing: -.013em; }
.mst p { padding-top: 3px; line-height: 25px; letter-spacing: -.026em; }
.mst .add { margin-left: auto; line-height: 24px; letter-spacing: -.026em; }
.mst .ptr { left: 447px; top: 29px; width: 9px; height: 15px; }
.mfoot { height: 114px; padding: 20px 18px; background: #f8faf9; border-radius: 0 0 8px 8px; }
.mfoot p { color: #a7173a; line-height: 25px; letter-spacing: -.008em; }
.mact { display: flex; align-items: center; gap: 10px; margin-top: 10px; }
.mbtn { display: flex; width: 237px; height: 40px; border: 1px solid #dfe2e4; border-width: 2px 1px; border-radius: 7px; color: #b3203f; font-weight: 500; line-height: 36px; }
.mbtn > span { width: 186px; text-align: center; border-right: 1px solid #dfe2e4; }
.mbtn > i { flex: 1; display: flex; align-items: center; justify-content: center; }
.mbtn .caret { border-width: 5px 5px 0; }
.also { font-size: 15.300px; letter-spacing: -.039em; color: #24292f; }

/* pen annotations laid over the page */
.ink { position: absolute; left: 0; top: 0; width: 2481px; height: 3510px; fill: none; stroke-linecap: round; stroke-linejoin: round; }
.ink path { fill: none; }
.ink .w, .ink .w text { font-family: Lato, sans-serif; font-weight: 400; stroke-width: 3px; }
.red { stroke: #ff0032; }
.red text { fill: #ff0032; }
.black { stroke: #000; }
.black text { fill: #000; }
.blue { stroke: #0061ff; }
.blue text { fill: #0061ff; }
.teal { stroke: #008c8a; }
.teal text { fill: #008c8a; }
```
